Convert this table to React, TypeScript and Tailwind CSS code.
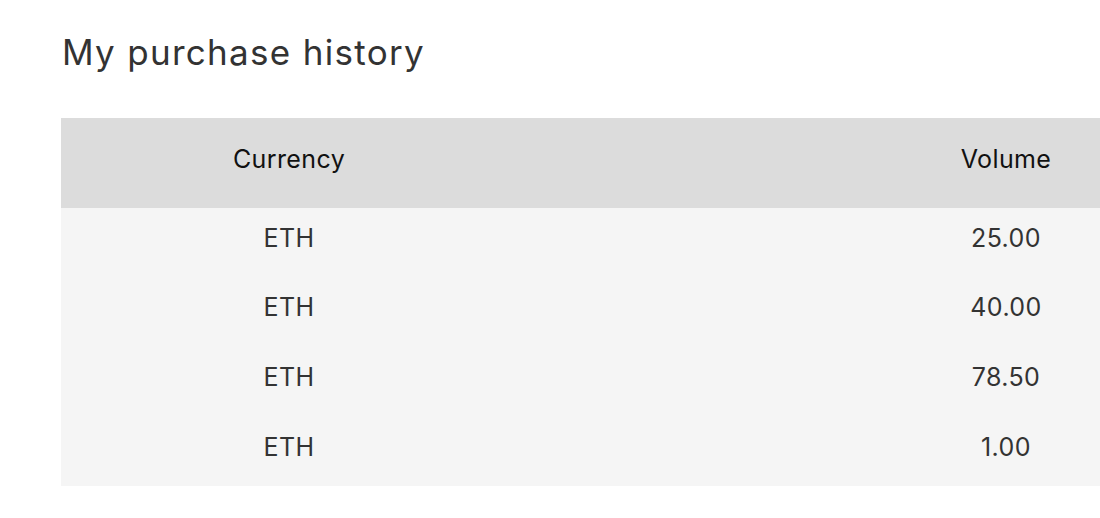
import React from 'react';

const rows = [
  { currency: 'ETH', volume: '25.00', h: 'h-[62px]' },
  { currency: 'ETH', volume: '40.00', h: 'h-[69px]' },
  { currency: 'ETH', volume: '78.50', h: 'h-[70px]' },
  { currency: 'ETH', volume: '1.00', h: 'h-[70px]' },
];

const App = () => {
  return (
    <div
      className="w-[1100px] h-[518px] bg-white overflow-hidden"
      style={{ fontFamily: 'Inter, "Noto Sans CJK JP", sans-serif' }}
    >
      <div className="pl-[61px] pt-[26px]">
        <h1 className="text-[35px] leading-[52px] tracking-[1.3px] text-[#333] pl-[1px]">
          My purchase history
        </h1>
        <div className="mt-[40px] w-[1500px]">
          <div className="flex h-[90px] items-center bg-[#dcdcdc] pb-[7px] text-[25px] tracking-[0.4px] text-[#111]">
            <div className="w-[456px] text-center">Currency</div>
            <div className="w-[978px] text-center">Volume</div>
          </div>
          <div className="bg-[#f5f5f5] pb-[7px] text-[25px] tracking-[0.4px] text-[#333]">
            {rows.map((r, i) => (
              <div key={i} className={`flex items-end pb-[17px] ${r.h}`}>
                <div className="w-[456px] text-center leading-[30px]">{r.currency}</div>
                <div className="w-[978px] text-center leading-[30px]">{r.volume}</div>
              </div>
            ))}
          </div>
        </div>
      </div>
    </div>
  );
};

export default App;
